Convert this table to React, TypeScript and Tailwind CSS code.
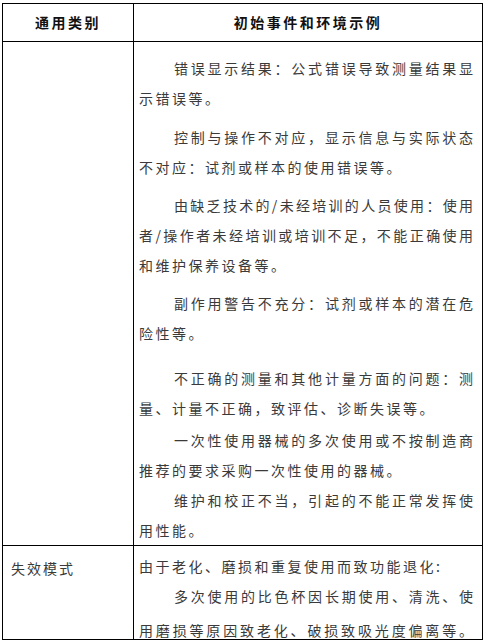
type Line = { text: string; indent?: boolean; full?: boolean };
type Para = { gap: string; lines: Line[] };

const rowOne: Para[] = [
  {
    gap: "mt-[11px]",
    lines: [
      { text: "错误显示结果：公式错误导致测量结果显", indent: true, full: true },
      { text: "示错误等。" },
    ],
  },
  {
    gap: "mt-[9px]",
    lines: [
      { text: "控制与操作不对应，显示信息与实际状态", indent: true, full: true },
      { text: "不对应：试剂或样本的使用错误等。" },
    ],
  },
  {
    gap: "mt-[8px]",
    lines: [
      { text: "由缺乏技术的/未经培训的人员使用：使用", indent: true, full: true },
      { text: "者/操作者未经培训或培训不足，不能正确使用", full: true },
      { text: "和维护保养设备等。" },
    ],
  },
  {
    gap: "mt-[8px]",
    lines: [
      { text: "副作用警告不充分：试剂或样本的潜在危", indent: true, full: true },
      { text: "险性等。" },
    ],
  },
  {
    gap: "mt-[15px]",
    lines: [
      { text: "不正确的测量和其他计量方面的问题：测", indent: true, full: true },
      { text: "量、计量不正确，致评估、诊断失误等。" },
    ],
  },
  {
    gap: "mt-[2px]",
    lines: [
      { text: "一次性使用器械的多次使用或不按制造商", indent: true, full: true },
      { text: "推荐的要求采购一次性使用的器械。" },
    ],
  },
  {
    gap: "mt-0",
    lines: [
      { text: "维护和校正不当，引起的不能正常发挥使", indent: true, full: true },
      { text: "用性能。" },
    ],
  },
];

function TextLine({ line }: { line: Line }) {
  return (
    <div
      className={`whitespace-nowrap leading-[30px] ${line.indent ? "pl-[35px]" : ""} ${
        line.full ? "[text-align-last:justify]" : "tracking-[2.5px]"
      }`}
    >
      {line.text}
    </div>
  );
}

export default function App() {
  return (
    <div className="min-h-screen bg-white pl-[2px] pt-[3px] font-['Noto_Sans_CJK_SC',sans-serif] text-[14px] text-[#3a3a3a]">
      <div className="w-[481px] border border-black">
        {/* Header */}
        <div className="flex h-[38px] border-b border-black font-bold text-[#111]">
          <div className="flex w-[131px] items-center justify-center border-r border-black tracking-[2.5px]">
            通用类别
          </div>
          <div className="flex w-[348px] items-center justify-center tracking-[2.5px]">
            初始事件和环境示例
          </div>
        </div>

        {/* Row 1 */}
        <div className="flex h-[504px] border-b border-black">
          <div className="w-[131px] border-r border-black" />
          <div className="w-[348px] pl-[5px] pr-[9px]">
            {rowOne.map((p, i) => (
              <div key={i} className={p.gap}>
                {p.lines.map((l, j) => (
                  <TextLine key={j} line={l} />
                ))}
              </div>
            ))}
          </div>
        </div>

        {/* Row 2 */}
        <div className="flex h-[93px]">
          <div className="w-[131px] border-r border-black pl-[8px] pt-[7px] leading-[30px] tracking-[2px]">
            失效模式
          </div>
          <div className="w-[348px] pl-[5px] pr-[9px] pt-[5px]">
            <TextLine line={{ text: "由于老化、磨损和重复使用而致功能退化:" }} />
            <TextLine line={{ text: "多次使用的比色杯因长期使用、清洗、使", indent: true, full: true }} />
            <div className="mt-[4px]">
              <TextLine line={{ text: "用磨损等原因致老化、破损致吸光度偏离等。", full: true }} />
            </div>
          </div>
        </div>
      </div>
    </div>
  );
}
